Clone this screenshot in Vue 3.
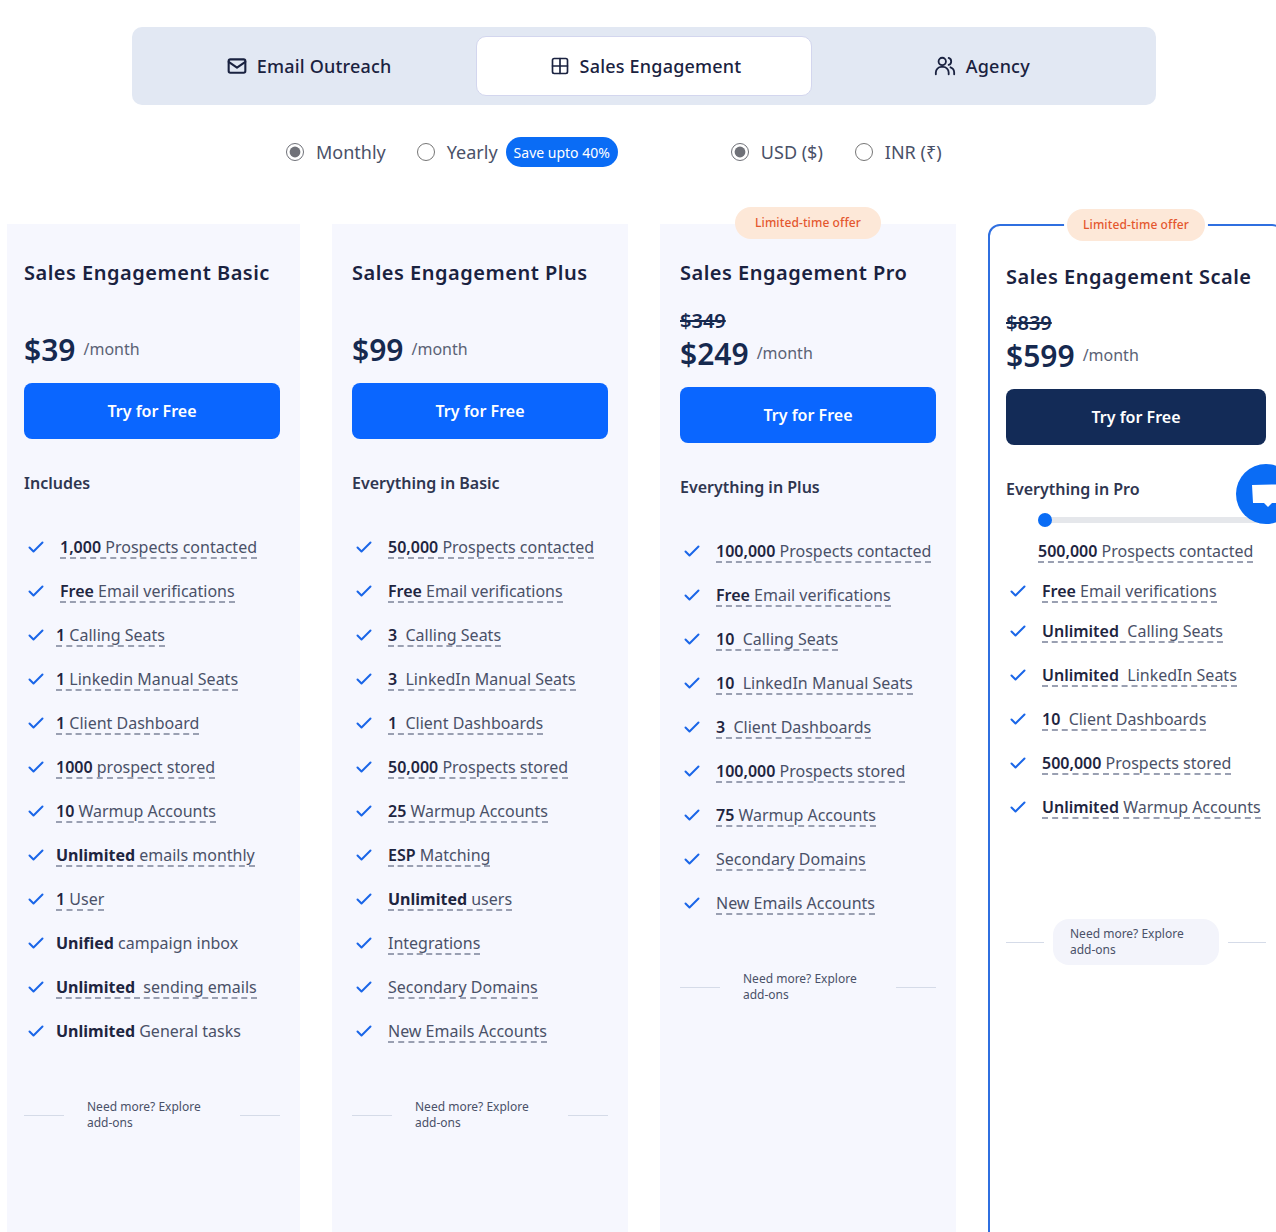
<script setup>
const plans = [
  {
    name: "Sales Engagement Basic",
    price: "$39",
    heading: "Includes",
    features: [
      { bold: "1,000", text: " Prospects contacted", dashed: true, inset: true },
      { bold: "Free", text: " Email verifications", dashed: true, inset: true },
      { bold: "1", text: " Calling Seats", dashed: true },
      { bold: "1", text: " Linkedin Manual Seats", dashed: true },
      { bold: "1", text: " Client Dashboard", dashed: true },
      { bold: "1000", text: " prospect stored", dashed: true },
      { bold: "10", text: " Warmup Accounts", dashed: true },
      { bold: "Unlimited", text: " emails monthly", dashed: true, heavy: true },
      { bold: "1", text: " User", dashed: true },
      { bold: "Unified", text: " campaign inbox", heavy: true },
      { bold: "Unlimited", text: "  sending emails", dashed: true, heavy: true },
      { bold: "Unlimited", text: " General tasks", heavy: true },
    ],
  },
  {
    name: "Sales Engagement Plus",
    price: "$99",
    heading: "Everything in Basic",
    features: [
      { bold: "50,000", text: " Prospects contacted", dashed: true, inset: true },
      { bold: "Free", text: " Email verifications", dashed: true, inset: true },
      { bold: "3", text: "  Calling Seats", dashed: true, inset: true },
      { bold: "3", text: "  LinkedIn Manual Seats", dashed: true, inset: true },
      { bold: "1", text: "  Client Dashboards", dashed: true, inset: true },
      { bold: "50,000", text: " Prospects stored", dashed: true, inset: true },
      { bold: "25", text: " Warmup Accounts", dashed: true, inset: true },
      { bold: "ESP", text: " Matching", dashed: true, inset: true },
      { bold: "Unlimited", text: " users", dashed: true, inset: true, heavy: true },
      { bold: "", text: "Integrations", dashed: true, inset: true },
      { bold: "", text: "Secondary Domains", dashed: true, inset: true },
      { bold: "", text: "New Emails Accounts", dashed: true, inset: true },
    ],
  },
  {
    name: "Sales Engagement Pro",
    oldPrice: "$349",
    price: "$249",
    heading: "Everything in Plus",
    offer: true,
    features: [
      { bold: "100,000", text: " Prospects contacted", dashed: true, inset: true },
      { bold: "Free", text: " Email verifications", dashed: true, inset: true },
      { bold: "10", text: "  Calling Seats", dashed: true, inset: true },
      { bold: "10", text: "  LinkedIn Manual Seats", dashed: true, inset: true },
      { bold: "3", text: "  Client Dashboards", dashed: true, inset: true },
      { bold: "100,000", text: " Prospects stored", dashed: true, inset: true },
      { bold: "75", text: " Warmup Accounts", dashed: true, inset: true },
      { bold: "", text: "Secondary Domains", dashed: true, inset: true },
      { bold: "", text: "New Emails Accounts", dashed: true, inset: true },
    ],
  },
  {
    name: "Sales Engagement Scale",
    oldPrice: "$839",
    price: "$599",
    heading: "Everything in Pro",
    offer: true,
    featured: true,
    features: [
      { bold: "500,000", text: " Prospects contacted", dashed: true, noCheck: true },
      { bold: "Free", text: " Email verifications", dashed: true, inset: true, tight: true },
      { bold: "Unlimited", text: "  Calling Seats", dashed: true, inset: true, tight: true },
      { bold: "Unlimited", text: "  LinkedIn Seats", dashed: true, inset: true },
      { bold: "10", text: "  Client Dashboards", dashed: true, inset: true },
      { bold: "500,000", text: " Prospects stored", dashed: true, inset: true },
      { bold: "Unlimited", text: " Warmup Accounts", dashed: true, inset: true },
    ],
  },
];
</script>

<template>
  <div class="page">
    <div class="tabs">
      <button type="button" class="tab">
        <svg width="20" height="20" viewBox="0 0 24 24" fill="none" stroke="currentColor" stroke-width="2.5" stroke-linecap="round" stroke-linejoin="round">
          <rect x="2" y="4" width="20" height="16" rx="2" />
          <path d="M2 7l10 7 10-7" />
        </svg>
        Email Outreach
      </button>
      <button type="button" class="tab active">
        <svg width="20" height="20" viewBox="0 0 24 24" fill="none" stroke="currentColor" stroke-width="2" stroke-linecap="round" stroke-linejoin="round">
          <rect x="3" y="3" width="18" height="18" rx="2" />
          <path d="M3 12h18M12 3v18" />
        </svg>
        Sales Engagement
      </button>
      <button type="button" class="tab">
        <svg width="22" height="22" viewBox="0 0 24 24" fill="none" stroke="currentColor" stroke-width="2" stroke-linecap="round" stroke-linejoin="round">
          <circle cx="9" cy="7" r="4" />
          <path d="M2 21v-2a6 6 0 0 1 6-6h2a6 6 0 0 1 6 6v2" />
          <path d="M16 3.2a4 4 0 0 1 0 7.6" />
          <path d="M22 21v-2a6 6 0 0 0-4-5.6" />
        </svg>
        Agency
      </button>
    </div>

    <div class="toggles">
      <div class="group">
        <label class="radio"><input type="radio" name="cycle" checked />Monthly</label>
        <label class="radio"><input type="radio" name="cycle" />Yearly</label>
        <span class="save">Save upto 40%</span>
      </div>
      <div class="group currency">
        <label class="radio"><input type="radio" name="cur" checked />USD ($)</label>
        <label class="radio"><input type="radio" name="cur" />INR (₹)</label>
      </div>
    </div>

    <div class="cards">
      <div v-for="plan in plans" :key="plan.name" class="card" :class="{ featured: plan.featured }">
        <span v-if="plan.offer" class="offer">Limited-time offer</span>
        <h3 class="title">{{ plan.name }}</h3>
        <div class="prices">
          <div v-if="plan.oldPrice" class="old">{{ plan.oldPrice }}</div>
          <div v-else class="old-empty"></div>
          <div class="price-line">
            <span class="price">{{ plan.price }}</span>
            <span class="per">/month</span>
          </div>
        </div>
        <button type="button" class="cta">Try for Free</button>
        <div class="heading">{{ plan.heading }}</div>
        <div v-if="plan.featured" class="slider"><span class="thumb"></span></div>
        <ul class="features">
          <li v-for="(f, i) in plan.features" :key="i" :class="{ tight: f.tight, 'no-check': f.noCheck }">
            <svg v-if="!f.noCheck" class="check" width="16" height="16" viewBox="0 0 16 16" fill="none" stroke="#1a66e8" stroke-width="2" stroke-linecap="round" stroke-linejoin="round">
              <path d="M1.5 8.5l4 4 9-9" />
            </svg>
            <span class="label" :class="{ dashed: f.dashed, inset: f.inset, heavy: f.heavy }"><b>{{ f.bold }}</b>{{ f.text }}</span>
          </li>
        </ul>
        <div class="addons">
          <span class="rule"></span>
          <span class="pill">Need more? Explore add-ons</span>
          <span class="rule"></span>
        </div>
      </div>
    </div>

    <div class="chat">
      <svg width="40" height="23" viewBox="0 0 40 23" fill="#fff">
        <path d="M0 1l40-1v19H20l-4 4-4-4H1z" />
      </svg>
    </div>
  </div>
</template>

<style scoped>
.page {
  position: relative;
  width: 1276px;
  height: 1232px;
  overflow: hidden;
  background: #fff;
  font-family: "Noto Sans", sans-serif;
  color: #1a2240;
}

.tabs {
  display: flex;
  gap: 2px;
  box-sizing: border-box;
  width: 1024px;
  height: 78px;
  margin: 0 0 0 132px;
  position: relative;
  top: 27px;
  padding: 9px;
  background: #e2e8f3;
  border-radius: 10px;
}

.tab {
  flex: 1;
  display: flex;
  align-items: center;
  justify-content: center;
  gap: 10px;
  padding: 0 0 0 3px;
  border: none;
  background: none;
  font-family: inherit;
  font-size: 18px;
  font-weight: 500;
  letter-spacing: 0.2px;
  color: #1a2240;
  border-radius: 10px;
}

.tab.active {
  background: #fff;
  border: 1px solid #d3d6ee;
}

.toggles {
  display: flex;
  gap: 113px;
  padding-left: 286px;
  height: 30px;
  margin-top: 59px;
}

.group {
  display: flex;
  align-items: center;
}

.radio {
  display: flex;
  align-items: center;
  gap: 12px;
  font-size: 18px;
  color: #4a5168;
}

.radio input {
  width: 18px;
  height: 18px;
  margin: 0;
  accent-color: #6f7178;
}

.radio + .radio {
  margin-left: 31px;
}

.currency .radio + .radio {
  margin-left: 32px;
}

.save {
  display: flex;
  align-items: center;
  height: 30px;
  margin-left: 8px;
  padding: 0 8px;
  border-radius: 15px;
  background: #0a6cf5;
  color: #fff;
  font-size: 14px;
}

.cards {
  display: grid;
  grid-template-columns: repeat(4, 296px);
  gap: 32px;
  margin-top: 57px;
  padding-left: 4px;
}

.card {
  position: relative;
  box-sizing: border-box;
  height: 1040px;
  padding: 35px 20px 0;
  background: #f6f7fe;
}

.card:first-child {
  margin-left: 3px;
  padding-left: 17px;
}

.card.featured {
  padding: 37px 16px 0;
  background: #fff;
  border: 2px solid #2f6fe0;
  border-radius: 12px;
}

.offer {
  position: absolute;
  top: -17px;
  left: 75px;
  width: 146px;
  height: 32px;
  line-height: 32px;
  text-align: center;
  border-radius: 16px;
  background: #fde8d8;
  color: #e4572e;
  font-size: 12px;
  font-weight: 500;
  letter-spacing: 0.1px;
}

.featured .offer {
  top: -17px;
  left: 77px;
  width: 138px;
  box-shadow: 0 0 0 3px #fff;
}

.title {
  margin: 0;
  font-size: 20px;
  line-height: 28px;
  font-weight: 600;
  color: #1a2240;
  letter-spacing: 0.5px;
}

.prices {
  margin-top: 22px;
}

.featured .prices {
  margin-top: 20px;
}

.old {
  height: 28px;
  line-height: 24px;
  font-size: 20px;
  font-weight: 600;
  color: #16294f;
  text-decoration: line-through;
}

.old-empty {
  height: 24px;
}

.price-line {
  display: flex;
  align-items: center;
  gap: 8px;
  height: 32px;
}

.price {
  font-size: 30px;
  font-weight: 600;
  color: #16294f;
}

.per {
  font-size: 16px;
  color: #5b6275;
}

.cta {
  display: block;
  width: 100%;
  height: 56px;
  margin-top: 18px;
  border: none;
  border-radius: 8px;
  background: #0a66ff;
  color: #fff;
  font-family: inherit;
  font-size: 16px;
  font-weight: 600;
}

.featured .cta {
  background: #132b57;
}

.heading {
  margin-top: 32px;
  font-size: 16px;
  line-height: 24px;
  font-weight: 600;
  color: #2f3650;
}

.slider {
  position: relative;
  height: 6px;
  margin: 16px 0 6px 32px;
  width: 250px;
  border-radius: 3px;
  background: #e5e7eb;
}

.thumb {
  position: absolute;
  left: 0;
  top: -4px;
  width: 14px;
  height: 14px;
  border-radius: 50%;
  background: #0a6cf5;
}

.features {
  list-style: none;
  margin: 30px 0 0;
  padding: 0;
}

.featured .features {
  margin-top: 4px;
}

.features li {
  display: flex;
  align-items: center;
  gap: 12px;
  height: 44px;
  padding-left: 4px;
  font-size: 16px;
  white-space: pre-wrap;
  color: #4a5168;
}

.features li.tight {
  margin-top: -4px;
}

.features li.no-check {
  padding-left: 32px;
}

.label {
  line-height: 20px;
}

.label b {
  font-weight: 600;
  color: #1e2540;
}

.label.heavy b {
  font-weight: 700;
}

.label.inset {
  margin-left: 4px;
}

.label.dashed {
  padding-top: 2px;
  border-bottom: 2px dashed #9aa0b2;
}

.addons {
  display: flex;
  align-items: center;
  gap: 6px;
  margin-top: 39px;
}

.featured .addons {
  gap: 9px;
  margin-top: 90px;
}

.rule {
  flex: 1;
  height: 1px;
  background: #d5dbe8;
}

.pill {
  box-sizing: border-box;
  width: 164px;
  padding: 7px 17px;
  font-size: 12px;
  line-height: 16px;
  color: #4a5168;
  border-radius: 16px;
}

.featured .pill {
  width: 166px;
  background: #f3f4fb;
}

.chat {
  position: absolute;
  left: 1236px;
  top: 464px;
  display: flex;
  align-items: center;
  width: 60px;
  height: 60px;
  padding: 3px 0 0 16px;
  box-sizing: border-box;
  border-radius: 50%;
  background: #0a6cf5;
}
</style>

<style>
html, body {
  margin: 0;
  overflow: hidden;
}
</style>
